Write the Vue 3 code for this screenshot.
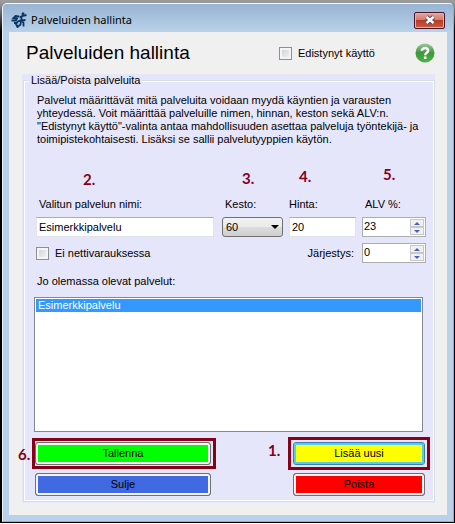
<script setup>
import { ref } from 'vue'

const name = ref('Esimerkkipalvelu')
const duration = ref('60')
const price = ref('20')
const vat = ref(23)
const order = ref(0)
const advanced = ref(false)
const notOnline = ref(false)

const services = ['Esimerkkipalvelu']
const selected = ref('Esimerkkipalvelu')

const intro = [
  'Palvelut määrittävät mitä palveluita voidaan myydä käyntien ja varausten',
  'yhteydessä. Voit määrittää palveluille nimen, hinnan, keston sekä ALV:n.',
  '"Edistynyt käyttö"-valinta antaa mahdollisuuden asettaa palveluja työntekijä- ja',
  'toimipistekohtaisesti. Lisäksi se sallii palvelutyyppien käytön.',
]
</script>

<template>
  <div class="desktop">
    <section class="window" aria-labelledby="window-title">
      <header class="titlebar">
        <svg class="titlebar__icon" viewBox="0 0 16 16" aria-hidden="true">
          <g fill="none" stroke="#0b3564" stroke-width="1.8">
            <path d="M8.500 5.500 11 4 15.500 3M10.500 4 10.500 8 12.500 11V14.500M14.500 8 10.500 8.500" />
            <path d="M8 4.500 4.500 4 2.500 6 6 6.500 5 8.500H0.500M10.500 8 7 9.500 5 12 6.500 15 9.500 12.500 10 9M3 11H6" />
          </g>
          <circle cx="12" cy="1.800" r="1.500" fill="#0b3564" />
        </svg>
        <span class="titlebar__text">Palveluiden hallinta</span>
        <button class="close" type="button" aria-label="Sulje ikkuna">
          <svg viewBox="0 0 12 10" aria-hidden="true">
            <path d="M2.500 2 9.500 8M9.500 2 2.500 8" stroke="#4c4f66" stroke-width="4.500" />
            <path d="M2.500 2 9.500 8M9.500 2 2.500 8" stroke="#fff" stroke-width="2.400" />
          </svg>
        </button>
      </header>

      <main class="client">
        <div class="heading">
          <h1 id="window-title">Palveluiden hallinta</h1>
          <label class="check">
            <input v-model="advanced" type="checkbox" />
            <span>Edistynyt käyttö</span>
          </label>
          <button class="help" type="button" aria-label="Ohje">
            <svg viewBox="0 0 20 20" aria-hidden="true">
              <defs>
                <linearGradient id="help-fill" x1="0" y1="0" x2="0" y2="1">
                  <stop offset="0" stop-color="#9cc89a" />
                  <stop offset="0.5" stop-color="#3c983c" />
                  <stop offset="1" stop-color="#4bb545" />
                </linearGradient>
              </defs>
              <circle cx="10" cy="10" r="9.500" fill="url(#help-fill)" />
              <path d="M6.800 7.800C7 4.200 13.300 4.200 13.200 7.600 13.100 9.800 10.200 9.800 10.200 12.300" fill="none" stroke="#fff" stroke-width="2.400" />
              <rect x="8.900" y="13.500" width="2.600" height="2.500" fill="#fff" />
            </svg>
          </button>
        </div>

        <div class="panel">
          <fieldset class="group">
            <legend>Lisää/Poista palveluita</legend>

            <p class="intro">
              <span v-for="line in intro" :key="line">{{ line }}</span>
            </p>

            <div class="form">
              <div class="field field--name">
                <span class="step step--name">2.</span>
                <label for="name">Valitun palvelun nimi:</label>
                <input id="name" v-model="name" class="text" type="text" />
              </div>
              <div class="field">
                <span class="step step--duration">3.</span>
                <label for="duration">Kesto:</label>
                <div class="combo">
                  <select id="duration" v-model="duration">
                    <option>30</option>
                    <option>60</option>
                    <option>90</option>
                  </select>
                  <svg viewBox="0 0 8 4" aria-hidden="true"><path d="M0 0H8L4 4Z" /></svg>
                </div>
              </div>
              <div class="field field--price">
                <span class="step step--price">4.</span>
                <label for="price">Hinta:</label>
                <input id="price" v-model="price" class="text" type="text" />
              </div>
              <div class="field">
                <span class="step step--vat">5.</span>
                <label for="vat">ALV %:</label>
                <div class="spin">
                  <input id="vat" v-model="vat" type="text" />
                  <div class="spin__buttons">
                    <button type="button" aria-label="Lisää" @click="vat++"><svg viewBox="0 0 6 3"><path d="M0 3H6L3 0Z" /></svg></button>
                    <button type="button" aria-label="Vähennä" @click="vat--"><svg viewBox="0 0 6 3"><path d="M0 0H6L3 3Z" /></svg></button>
                  </div>
                </div>
              </div>

              <label class="check">
                <input v-model="notOnline" type="checkbox" />
                <span>Ei nettivarauksessa</span>
              </label>
              <label class="order-label" for="order">Järjestys:</label>
              <div class="spin">
                <input id="order" v-model="order" type="text" />
                <div class="spin__buttons">
                  <button type="button" aria-label="Lisää" @click="order++"><svg viewBox="0 0 6 3"><path d="M0 3H6L3 0Z" /></svg></button>
                  <button type="button" aria-label="Vähennä" @click="order--"><svg viewBox="0 0 6 3"><path d="M0 0H6L3 3Z" /></svg></button>
                </div>
              </div>
            </div>

            <label class="list-label" for="services">Jo olemassa olevat palvelut:</label>
            <select id="services" v-model="selected" class="list" size="8">
              <option v-for="service in services" :key="service">{{ service }}</option>
            </select>

            <div class="actions">
              <div class="actions__left">
                <div class="mark mark--save">
                  <span class="step step--save">6.</span>
                  <button class="action action--green" type="button">Tallenna</button>
                </div>
                <button class="action action--blue" type="button">Sulje</button>
              </div>
              <div class="actions__right">
                <div class="mark mark--add">
                  <span class="step step--add">1.</span>
                  <button class="action action--yellow" type="button">Lisää uusi</button>
                </div>
                <button class="action action--red" type="button">Poista</button>
              </div>
            </div>
          </fieldset>
        </div>
      </main>
    </section>
  </div>
</template>

<style>
body {
  margin: 0;
  background: #fff;
}
</style>

<style scoped>
* {
  box-sizing: border-box;
}

.desktop {
  padding: 3px 0 1px;
  background: linear-gradient(#9b9b9b 0 2px, #000 32px);
  font: 11px/13px 'Liberation Sans', Arial, sans-serif;
  color: #000;
}

button,
input,
select {
  margin: 0;
  font: inherit;
  color: inherit;
}

button {
  padding: 0;
}

/* window frame */
.window {
  margin: 0 1px 0 2px;
  padding: 0 6px 6px;
  border: 1px solid #35d5ee;
  border-top-color: #f4f8fc;
  border-left-color: #e8f2fa;
  border-radius: 5px 5px 0 0;
  background: linear-gradient(#98b4d2, #b9d1ea 28px);
}

.titlebar {
  display: flex;
  align-items: center;
  height: 28px;
  padding: 0 2px;
}

.titlebar__icon {
  width: 16px;
  height: 16px;
  margin-top: 4px;
}

.titlebar__text {
  flex: 1;
  margin: 4px 0 0 4px;
  font: 11px/16px 'Noto Sans', 'Open Sans', sans-serif;
}

.close {
  display: flex;
  align-items: center;
  justify-content: center;
  width: 31px;
  height: 17px;
  margin-top: 4px;
  border: 1px solid #43162a;
  border-radius: 2px;
  background: linear-gradient(#e5a49a, #d5796b 48%, #b83b25 50%, #cd5c42);
  box-shadow: inset 0 0 0 1px #e9b0a8;
}

.close svg {
  width: 12px;
  height: 10px;
}

.client {
  padding: 0 12px 12px 13px;
  background: #f0f0f0;
}

.heading {
  display: flex;
  align-items: center;
  height: 42px;
}

h1 {
  flex: 1;
  margin: 0;
  padding-left: 4px;
  font: 19px/24px 'Liberation Sans', Arial, sans-serif;
}

.check {
  display: flex;
  align-items: center;
  gap: 6px;
}

.check input {
  appearance: none;
  width: 13px;
  height: 13px;
  border: 1px solid #8e8f8f;
  background: linear-gradient(135deg, #cbcfd5, #f6f6f6);
  box-shadow: inset 0 0 0 2px #f4f4f4;
}

.help {
  width: 20px;
  height: 20px;
  margin-left: 40px;
  border: 0;
  background: none;
}

.help svg {
  display: block;
}

/* group box */
.panel {
  padding: 0 0 1px 1px;
  background: #e6e6fa;
}

.group {
  min-width: 0;
  margin: 0;
  padding: 6px 8px 5px 10px;
  border: 1px solid #d5dfe5;
  box-shadow: inset 0 0 0 1px #fff;
}

legend {
  margin-left: -5px;
  padding: 0 2px;
  background: #e6e6fa;
}

.intro {
  margin: 0;
  padding: 1px 0 0 3px;
}

.intro span {
  display: block;
  white-space: nowrap;
}

.form {
  display: grid;
  grid-template-columns: 1fr 61px 67px 64px;
  gap: 6px;
  align-items: center;
  margin-top: 52px;
  padding-left: 2px;
}

.field {
  position: relative;
}

.field > label {
  display: block;
  margin-bottom: 6px;
  padding-left: 3px;
}

.field--price > label {
  padding-left: 0;
}

.field--name {
  padding-right: 2px;
}

.text {
  display: block;
  width: 100%;
  height: 20px;
  padding: 0 2px;
  border: 1px solid #e2e3ea;
  border-top-color: #abadb3;
  background: #fff;
}

.combo {
  position: relative;
}

.combo select {
  appearance: none;
  display: block;
  width: 100%;
  height: 20px;
  padding: 0 3px;
  border: 1px solid #707070;
  border-radius: 3px;
  background: linear-gradient(#f2f2f2, #ebebeb 48%, #ddd 50%, #cfcfcf);
}

.combo svg {
  position: absolute;
  top: 8px;
  right: 4px;
  width: 8px;
  height: 4px;
  pointer-events: none;
}

.spin {
  display: flex;
  height: 20px;
  padding: 1px;
  border: 1px solid #abadb3;
  background: #fff;
}

.spin input {
  flex: 1;
  min-width: 0;
  padding: 0 0 2px;
  border: 0;
  background: none;
}

.spin__buttons {
  display: grid;
  grid-template-rows: 1fr 1fr;
  width: 14px;
}

.spin__buttons button {
  display: flex;
  align-items: center;
  justify-content: center;
  border: 1px solid #c8c8c8;
  background: #f0f0f0;
}

.spin__buttons svg {
  width: 6px;
  height: 3px;
  fill: #4a62b5;
}

.order-label {
  grid-column: 2 / 4;
  padding-right: 2px;
  text-align: right;
}

/* list of services */
.list-label {
  display: block;
  margin-top: 12px;
  padding-left: 3px;
}

.list {
  display: block;
  width: calc(100% - 3px);
  height: 135px;
  margin-top: 9px;
  padding: 1px;
  border: 1px solid #828790;
  border-radius: 0;
  background: #fff;
  overflow: hidden;
}

.list option {
  min-height: 13px;
  padding: 0 2px;
  line-height: 13px;
}

.list option:checked {
  background: #39f linear-gradient(#39f, #39f);
  color: #fff;
  -webkit-text-fill-color: #fff;
}

/* buttons */
.actions {
  display: flex;
  justify-content: space-between;
  margin: 5px -4px 0 -2px;
}

.actions__left {
  width: 184px;
}

.actions__right {
  width: 142px;
}

.mark {
  position: relative;
  border: 3px solid #870018;
}

.mark--save {
  margin-top: 1px;
  padding: 1px 2px 1px 0;
}

.mark--add {
  padding: 2px;
}

.action {
  display: block;
  width: 100%;
  height: 23px;
  border: 1px solid #707070;
  border-radius: 3px;
  background: #f4f4f4;
  box-shadow: inset 0 0 0 2px #f4f4f4;
}

.mark + .action {
  margin-top: 3px;
}

.actions__left .mark + .action {
  width: calc(100% - 8px);
  margin-top: 4px;
  margin-left: 3px;
}

.actions__right .mark + .action {
  width: calc(100% - 10px);
  margin-left: 5px;
}

.action--green {
  background: #0f0;
}

.action--blue {
  background: #4169e1;
}

.action--yellow {
  border-color: #3c7fb1;
  background: #ff0;
  box-shadow: inset 0 0 0 2px #55cdf2;
}

.action--red {
  background: #f00;
}

/* numbered walkthrough steps */
.step {
  position: absolute;
  font: bold 15px/16px Lato, sans-serif;
  color: #870018;
}

.step--name {
  top: -27px;
  left: 47px;
}

.step--duration {
  top: -28px;
  left: 20px;
}

.step--price {
  top: -30px;
  left: 10px;
}

.step--vat {
  top: -32px;
  left: 21px;
}

.step--save {
  top: 5px;
  left: -17px;
}

.step--add {
  top: 2px;
  left: -23px;
}
</style>
